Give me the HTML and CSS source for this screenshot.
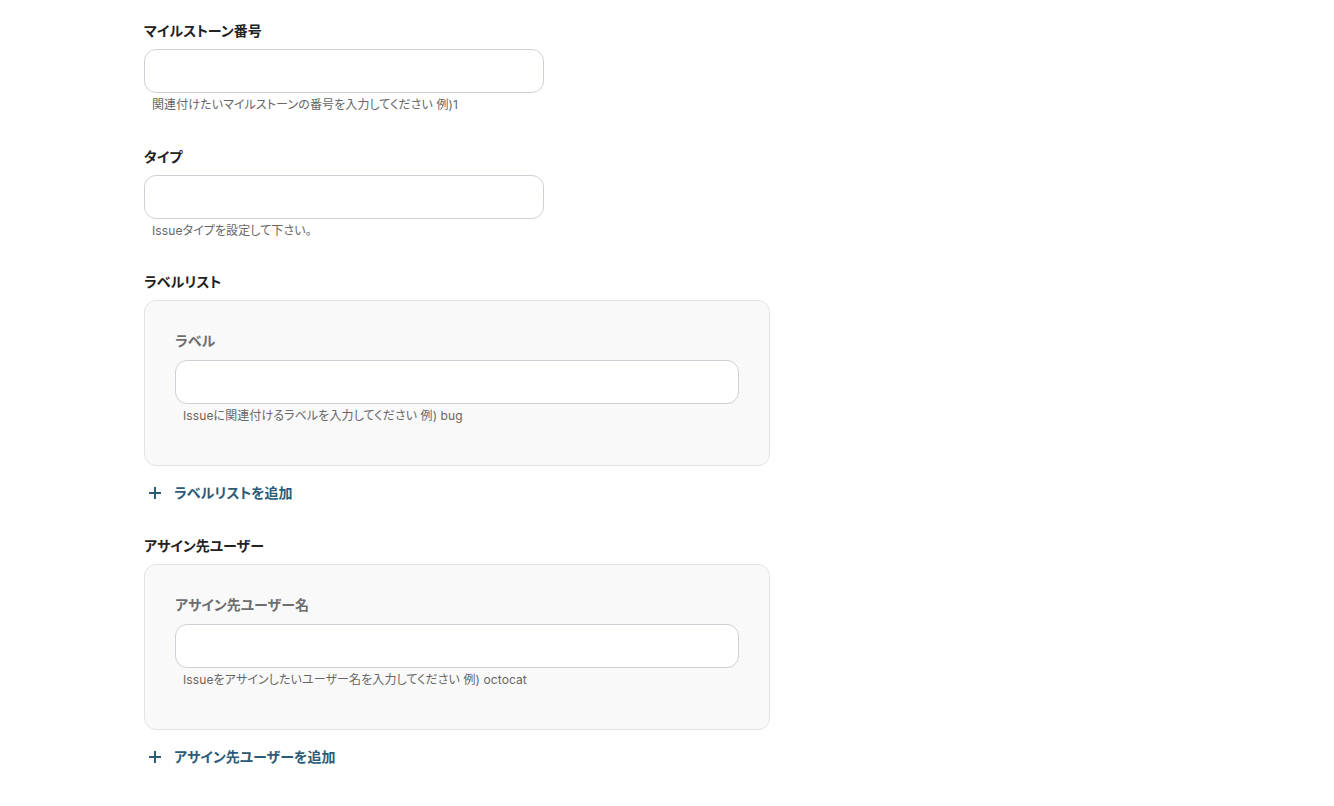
FILE: index.html
```html
<!DOCTYPE html>
<html lang="ja">
<head>
<meta charset="utf-8">
<link rel="stylesheet" href="styles.css">
</head>
<body>
<div class="form">
  <div class="field first">
    <div class="label">マイルストーン番号</div>
    <div class="input"></div>
    <div class="hint">関連付けたいマイルストーンの番号を入力してください 例)1</div>
  </div>
  <div class="field">
    <div class="label">タイプ</div>
    <div class="input"></div>
    <div class="hint">Issueタイプを設定して下さい。</div>
  </div>
  <div class="field">
    <div class="label">ラベルリスト</div>
    <div class="group">
      <div class="sublabel">ラベル</div>
      <div class="input wide"></div>
      <div class="hint">Issueに関連付けるラベルを入力してください 例) bug</div>
    </div>
    <div class="add">
      <svg class="plus" width="14" height="14" viewBox="0 0 14 14"><path d="M7 1v12M1 7h12" stroke="currentColor" stroke-width="2" fill="none"/></svg>
      <span>ラベルリストを追加</span>
    </div>
  </div>
  <div class="field">
    <div class="label">アサイン先ユーザー</div>
    <div class="group">
      <div class="sublabel">アサイン先ユーザー名</div>
      <div class="input wide"></div>
      <div class="hint">Issueをアサインしたいユーザー名を入力してください 例) octocat</div>
    </div>
    <div class="add">
      <svg class="plus" width="14" height="14" viewBox="0 0 14 14"><path d="M7 1v12M1 7h12" stroke="currentColor" stroke-width="2" fill="none"/></svg>
      <span>アサイン先ユーザーを追加</span>
    </div>
  </div>
</div>
</body>
</html>
```
FILE: styles.css
```css
html, body {
  margin: 0;
  background: #ffffff;
}
body {
  font-family: "Inter", "Noto Sans CJK JP", sans-serif;
  font-feature-settings: "palt";
  color: #222;
}
.form {
  padding: 21px 0 0 144px;
  display: flex;
  flex-direction: column;
  gap: 33px;
}
.field {
  display: flex;
  flex-direction: column;
  align-items: flex-start;
}
.field.first {
  margin-bottom: 1px;
}
.label {
  font-size: 14px;
  font-weight: 700;
  line-height: 20px;
  color: #222;
  margin-bottom: 8px;
}
.input {
  width: 398px;
  height: 42px;
  border: 1px solid #cdd0d6;
  border-radius: 12px;
  background: #fff;
}
.input.wide {
  width: 562px;
}
.hint {
  font-size: 12px;
  line-height: 16px;
  color: #666;
  margin-top: 4px;
  padding-left: 8px;
  letter-spacing: 0.1px;
}
.group {
  width: 564px;
  padding: 30px 30px 41px 30px;
  background: #f9f9f9;
  border: 1px solid #e3e3e3;
  border-radius: 12px;
}
.sublabel {
  font-size: 14px;
  font-weight: 700;
  line-height: 20px;
  color: #6e6e6e;
  margin-bottom: 9px;
}
.add {
  display: flex;
  align-items: center;
  gap: 12px;
  margin-top: 17px;
  padding-left: 4px;
  color: #2c5b77;
  font-size: 14px;
  font-weight: 700;
  line-height: 20px;
}
.plus {
  display: block;
}
```
